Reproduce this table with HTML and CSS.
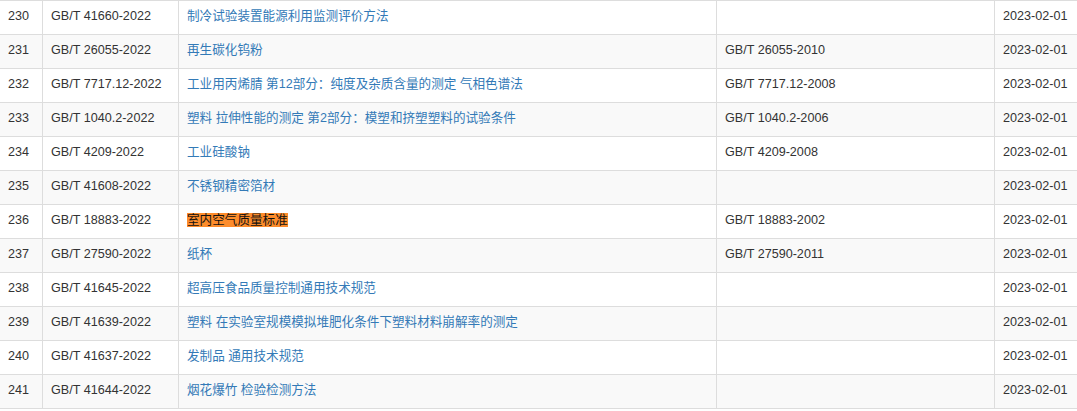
FILE: index.html
```html
<!DOCTYPE html>
<html lang="zh-CN">
<head>
<meta charset="utf-8">
<title>标准列表</title>
<link rel="stylesheet" href="styles.css">
</head>
<body>
<table class="std-table">
  <colgroup>
    <col class="c-no">
    <col class="c-code">
    <col class="c-name">
    <col class="c-old">
    <col class="c-date">
  </colgroup>
  <tbody>
    <tr><td>230</td><td>GB/T 41660-2022</td><td><a class="lnk" href="#">制冷试验装置能源利用监测评价方法</a></td><td></td><td>2023-02-01</td></tr>
    <tr><td>231</td><td>GB/T 26055-2022</td><td><a class="lnk" href="#">再生碳化钨粉</a></td><td>GB/T 26055-2010</td><td>2023-02-01</td></tr>
    <tr><td>232</td><td>GB/T 7717.12-2022</td><td><a class="lnk" href="#">工业用丙烯腈 第12部分：纯度及杂质含量的测定 气相色谱法</a></td><td>GB/T 7717.12-2008</td><td>2023-02-01</td></tr>
    <tr><td>233</td><td>GB/T 1040.2-2022</td><td><a class="lnk" href="#">塑料 拉伸性能的测定 第2部分：模塑和挤塑塑料的试验条件</a></td><td>GB/T 1040.2-2006</td><td>2023-02-01</td></tr>
    <tr><td>234</td><td>GB/T 4209-2022</td><td><a class="lnk" href="#">工业硅酸钠</a></td><td>GB/T 4209-2008</td><td>2023-02-01</td></tr>
    <tr><td>235</td><td>GB/T 41608-2022</td><td><a class="lnk" href="#">不锈钢精密箔材</a></td><td></td><td>2023-02-01</td></tr>
    <tr><td>236</td><td>GB/T 18883-2022</td><td><a class="lnk hl" href="#">室内空气质量标准</a></td><td>GB/T 18883-2002</td><td>2023-02-01</td></tr>
    <tr><td>237</td><td>GB/T 27590-2022</td><td><a class="lnk" href="#">纸杯</a></td><td>GB/T 27590-2011</td><td>2023-02-01</td></tr>
    <tr><td>238</td><td>GB/T 41645-2022</td><td><a class="lnk" href="#">超高压食品质量控制通用技术规范</a></td><td></td><td>2023-02-01</td></tr>
    <tr><td>239</td><td>GB/T 41639-2022</td><td><a class="lnk" href="#">塑料 在实验室规模模拟堆肥化条件下塑料材料崩解率的测定</a></td><td></td><td>2023-02-01</td></tr>
    <tr><td>240</td><td>GB/T 41637-2022</td><td><a class="lnk" href="#">发制品 通用技术规范</a></td><td></td><td>2023-02-01</td></tr>
    <tr><td>241</td><td>GB/T 41644-2022</td><td><a class="lnk" href="#">烟花爆竹 检验检测方法</a></td><td></td><td>2023-02-01</td></tr>
  </tbody>
</table>
</body>
</html>
```
FILE: styles.css
```css
html, body {
  margin: 0;
  padding: 0;
  background: #fff;
  overflow: hidden;
}
body {
  font-family: "Liberation Sans", "Noto Sans CJK SC", Arial, sans-serif;
  font-size: 12.6px;
  color: #333;
}
.std-table {
  border-collapse: collapse;
  table-layout: fixed;
  width: 1079px;
  margin-left: -1px;
}
.c-no { width: 43px; }
.c-code { width: 136px; }
.c-name { width: 538px; }
.c-old { width: 278px; }
.c-date { width: 84px; }
.std-table td {
  border: 1px solid #ddd;
  padding: 7px 8px 9px;
  line-height: 17px;
  white-space: nowrap;
  vertical-align: top;
  text-align: left;
}
.std-table tr:nth-child(even) td {
  background: #f9f9f9;
}
.lnk {
  color: #337ab7;
  text-decoration: none;
}
.lnk.hl {
  background: #fd8c2b;
  color: #111;
}
```
